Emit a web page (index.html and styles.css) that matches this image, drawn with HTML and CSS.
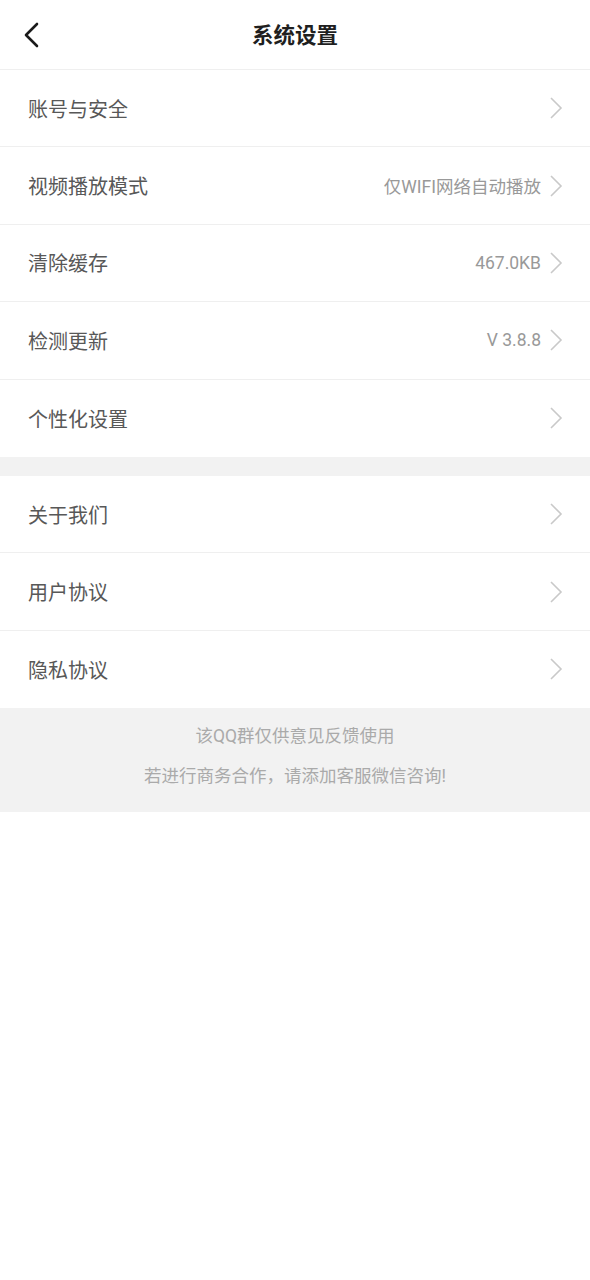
FILE: index.html
```html
<!DOCTYPE html>
<html lang="zh-CN">
<head>
<meta charset="utf-8">
<title>系统设置</title>
<link rel="stylesheet" href="styles.css">
</head>
<body>
<header class="topbar">
  <span class="back">
    <svg width="16" height="26" viewBox="0 0 16 26"><path d="M14 2 L3 13 L14 24" fill="none" stroke="#1a1a1a" stroke-width="2.6" stroke-linecap="round" stroke-linejoin="round"/></svg>
  </span>
  <h1 class="title">系统设置</h1>
</header>

<section class="group">
  <div class="row"><span class="label">账号与安全</span><span class="right"><svg class="chev" width="14" height="24" viewBox="0 0 14 24"><path d="M2 2 L12 12 L2 22" fill="none" stroke="#c9c9c9" stroke-width="1.6"/></svg></span></div>
  <div class="row"><span class="label">视频播放模式</span><span class="right"><span class="value">仅WIFI网络自动播放</span><svg class="chev" width="14" height="24" viewBox="0 0 14 24"><path d="M2 2 L12 12 L2 22" fill="none" stroke="#c9c9c9" stroke-width="1.6"/></svg></span></div>
  <div class="row"><span class="label">清除缓存</span><span class="right"><span class="value">467.0KB</span><svg class="chev" width="14" height="24" viewBox="0 0 14 24"><path d="M2 2 L12 12 L2 22" fill="none" stroke="#c9c9c9" stroke-width="1.6"/></svg></span></div>
  <div class="row"><span class="label">检测更新</span><span class="right"><span class="value">V 3.8.8</span><svg class="chev" width="14" height="24" viewBox="0 0 14 24"><path d="M2 2 L12 12 L2 22" fill="none" stroke="#c9c9c9" stroke-width="1.6"/></svg></span></div>
  <div class="row"><span class="label">个性化设置</span><span class="right"><svg class="chev" width="14" height="24" viewBox="0 0 14 24"><path d="M2 2 L12 12 L2 22" fill="none" stroke="#c9c9c9" stroke-width="1.6"/></svg></span></div>
</section>

<div class="gap"></div>

<section class="group">
  <div class="row"><span class="label">关于我们</span><span class="right"><svg class="chev" width="14" height="24" viewBox="0 0 14 24"><path d="M2 2 L12 12 L2 22" fill="none" stroke="#c9c9c9" stroke-width="1.6"/></svg></span></div>
  <div class="row"><span class="label">用户协议</span><span class="right"><svg class="chev" width="14" height="24" viewBox="0 0 14 24"><path d="M2 2 L12 12 L2 22" fill="none" stroke="#c9c9c9" stroke-width="1.6"/></svg></span></div>
  <div class="row"><span class="label">隐私协议</span><span class="right"><svg class="chev" width="14" height="24" viewBox="0 0 14 24"><path d="M2 2 L12 12 L2 22" fill="none" stroke="#c9c9c9" stroke-width="1.6"/></svg></span></div>
</section>

<footer class="note">
  <p>该QQ群仅供意见反馈使用</p>
  <p>若进行商务合作，请添加客服微信咨询!</p>
</footer>
</body>
</html>
```

FILE: styles.css
```css
* { box-sizing: border-box; }
html, body {
  margin: 0;
  padding: 0;
  background: #fff;
  font-family: "Noto Sans CJK SC", "Noto Sans", sans-serif;
}
.topbar {
  position: relative;
  height: 70px;
  display: flex;
  align-items: center;
  justify-content: center;
  border-bottom: 1px solid #efefef;
}
.back {
  position: absolute;
  left: 23px;
  top: 22px;
  display: flex;
}
.title {
  margin: 0;
  font-size: 21.5px;
  font-weight: 700;
  color: #1f1f1f;
  line-height: 1;
  margin-top: -2px;
}
.group { display: flex; flex-direction: column; }
.row {
  height: 77.4px;
  display: flex;
  align-items: center;
  justify-content: space-between;
  padding: 0 27px 0 28px;
  border-bottom: 1px solid #efefef;
}
.row:last-child { border-bottom: none; }
.label {
  font-size: 20px;
  color: #585858;
}
.right {
  display: flex;
  align-items: center;
  gap: 8px;
}
.value {
  font-family: Roboto, "Noto Sans CJK SC", sans-serif;
  font-size: 17.5px;
  color: #999;
}
.chev { display: block; }
.gap {
  height: 19px;
  background: #f2f2f2;
}
.note {
  background: #f2f2f2;
  padding: 8px 0 16px;
  text-align: center;
  font-family: Roboto, "Noto Sans CJK SC", sans-serif;
}
.note p {
  margin: 0;
  line-height: 40px;
  font-size: 17.5px;
  color: #aaa;
}
```
